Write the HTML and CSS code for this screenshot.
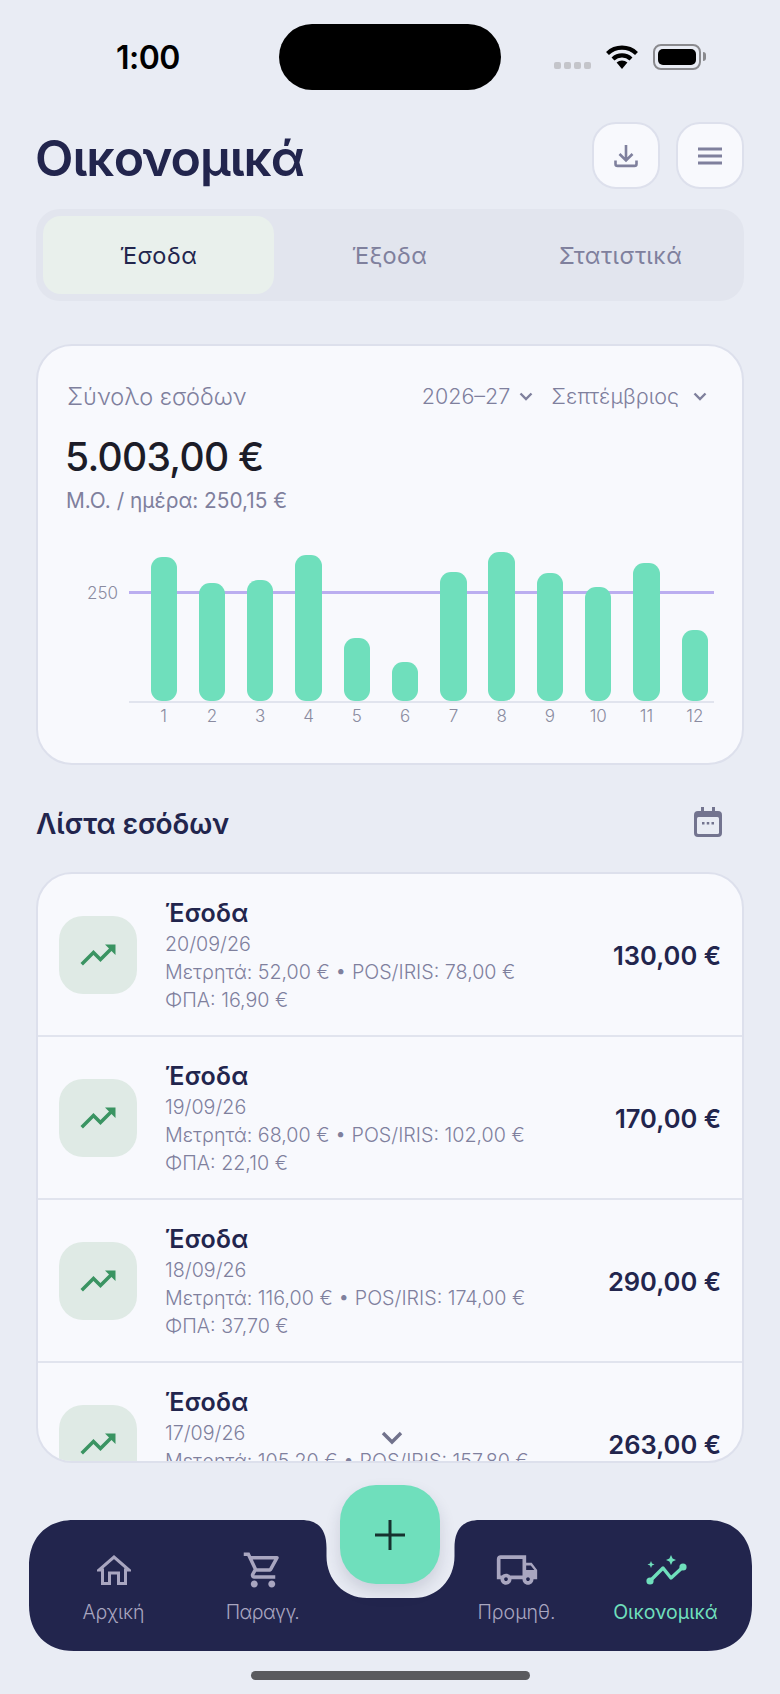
FILE: index.html
```html
<!DOCTYPE html>
<html lang="el">
<head>
  <meta charset="UTF-8" />
  <title>Οικονομικά</title>
  <link rel="stylesheet" href="styles.css">
</head>
<body>
  <div class="status">
    <div class="time">1:00</div>
    <div class="island"></div>
    <div class="status-right">
      <div class="dots"><i></i><i></i><i></i><i></i></div>
      <svg class="wifi" width="34" height="26" viewBox="0 0 34 26">
        <path d="M2.5 9.500a21 21 0 0 1 29 0M8 15a13 13 0 0 1 18 0" fill="none" stroke="#000" stroke-width="4.200"/>
        <path d="M11.600 18.600a8 8 0 0 1 10.800 0L17 25z"/>
      </svg>
      <div class="battery"><span></span></div>
      <div class="battery-cap"></div>
    </div>
  </div>

  <header class="top">
    <h1>Οικονομικά</h1>
    <button class="icon-btn">
      <svg width="26" height="26" viewBox="0 0 26 26" fill="none" stroke="#7f809d" stroke-width="2.600">
        <path d="M13 2v15M6.500 11l6.500 6.500 6.500-6.500M2.500 17.500v3.400a2 2 0 0 0 2 2h17a2 2 0 0 0 2-2v-3.400"/>
      </svg>
    </button>
    <button class="icon-btn">
      <svg width="26" height="18" viewBox="0 0 26 18" fill="none" stroke="#7f809d" stroke-width="2.800">
        <path d="M1 2h24M1 9h24M1 16h24"/>
      </svg>
    </button>
  </header>

  <nav class="tabs">
    <div class="tab active">Έσοδα</div>
    <div class="tab">Έξοδα</div>
    <div class="tab">Στατιστικά</div>
  </nav>

  <section class="card">
    <div class="card-top">
      <span class="card-label">Σύνολο εσόδων</span>
      <span class="picker picker-year">2026–27
        <svg width="14" height="9" viewBox="0 0 14 9" fill="none" stroke="#7f809d" stroke-width="2.400"><path d="M1.500 1.500 7 7l5.500-5.500"/></svg>
      </span>
      <span class="picker">Σεπτέμβριος
        <svg width="14" height="9" viewBox="0 0 14 9" fill="none" stroke="#7f809d" stroke-width="2.400"><path d="M1.500 1.500 7 7l5.500-5.500"/></svg>
      </span>
    </div>
    <div class="total">5.003,00 €</div>
    <div class="avg">Μ.Ο. / ημέρα: 250,15 €</div>
    <div class="chart">
      <div class="chart-y">250</div>
      <div class="chart-main">
        <div class="plot">
          <div class="ref-line"></div>
          <div class="bar" style="height:144px"></div>
          <div class="bar" style="height:118px"></div>
          <div class="bar" style="height:121px"></div>
          <div class="bar" style="height:146px"></div>
          <div class="bar" style="height:63px"></div>
          <div class="bar" style="height:39px"></div>
          <div class="bar" style="height:129px"></div>
          <div class="bar" style="height:149px"></div>
          <div class="bar" style="height:128px"></div>
          <div class="bar" style="height:114px"></div>
          <div class="bar" style="height:138px"></div>
          <div class="bar" style="height:71px"></div>
        </div>
        <div class="ticks">
          <span>1</span><span>2</span><span>3</span><span>4</span><span>5</span><span>6</span>
          <span>7</span><span>8</span><span>9</span><span>10</span><span>11</span><span>12</span>
        </div>
      </div>
    </div>
  </section>

  <div class="list-head">
    <h2>Λίστα εσόδων</h2>
    <svg width="28" height="30" viewBox="0 0 28 30">
      <path d="M7 0h3v4h8V0h3v4h3a4 4 0 0 1 4 4v18a4 4 0 0 1-4 4H4a4 4 0 0 1-4-4V8a4 4 0 0 1 4-4h3z" fill="#73748f"/>
      <rect x="3" y="10" width="22" height="17" rx="1.500" fill="#e9ecf4"/>
      <path d="M8 15h2.500v2.500H8zM12.750 15h2.500v2.500h-2.500zM17.500 15H20v2.500h-2.500z" fill="#73748f"/>
    </svg>
  </div>

  <section class="list">
    <div class="row">
      <div class="row-icon">
        <svg width="42" height="42" viewBox="0 0 24 24" fill="#3a9462"><path d="M16 6l2.290 2.290-4.880 4.880-4-4L2 16.590 3.410 18l6-6 4 4 6.300-6.290L22 12V6z"/></svg>
      </div>
      <div class="row-text">
        <div class="row-title">Έσοδα</div>
        <div class="row-line">20/09/26</div>
        <div class="row-line">Μετρητά: 52,00 € • POS/IRIS: 78,00 €</div>
        <div class="row-line">ΦΠΑ: 16,90 €</div>
      </div>
      <div class="row-amount">130,00 €</div>
    </div>
    <div class="row">
      <div class="row-icon">
        <svg width="42" height="42" viewBox="0 0 24 24" fill="#3a9462"><path d="M16 6l2.290 2.290-4.880 4.880-4-4L2 16.590 3.410 18l6-6 4 4 6.300-6.290L22 12V6z"/></svg>
      </div>
      <div class="row-text">
        <div class="row-title">Έσοδα</div>
        <div class="row-line">19/09/26</div>
        <div class="row-line">Μετρητά: 68,00 € • POS/IRIS: 102,00 €</div>
        <div class="row-line">ΦΠΑ: 22,10 €</div>
      </div>
      <div class="row-amount">170,00 €</div>
    </div>
    <div class="row">
      <div class="row-icon">
        <svg width="42" height="42" viewBox="0 0 24 24" fill="#3a9462"><path d="M16 6l2.290 2.290-4.880 4.880-4-4L2 16.590 3.410 18l6-6 4 4 6.300-6.290L22 12V6z"/></svg>
      </div>
      <div class="row-text">
        <div class="row-title">Έσοδα</div>
        <div class="row-line">18/09/26</div>
        <div class="row-line">Μετρητά: 116,00 € • POS/IRIS: 174,00 €</div>
        <div class="row-line">ΦΠΑ: 37,70 €</div>
      </div>
      <div class="row-amount">290,00 €</div>
    </div>
    <div class="row">
      <div class="row-icon">
        <svg width="42" height="42" viewBox="0 0 24 24" fill="#3a9462"><path d="M16 6l2.290 2.290-4.880 4.880-4-4L2 16.590 3.410 18l6-6 4 4 6.300-6.290L22 12V6z"/></svg>
      </div>
      <div class="row-text">
        <div class="row-title">Έσοδα</div>
        <div class="row-line">17/09/26</div>
        <div class="row-line">Μετρητά: 105,20 € • POS/IRIS: 157,80 €</div>
        <div class="row-line">ΦΠΑ: 34,19 €</div>
      </div>
      <div class="row-amount">263,00 €</div>
    </div>
    <svg class="more" width="22" height="14" viewBox="0 0 22 14" fill="none" stroke="#71728c" stroke-width="3.400"><path d="M2 2l9 9 9-9"/></svg>
  </section>

  <div class="bottom">
    <svg class="bottom-bg" width="723" height="131" viewBox="0 0 723 131">
      <path d="M45 0H272C290 0 297.500 10 297.500 28V36C297.500 60 315 78 338 78H385C408 78 425.500 60 425.500 36V28C425.500 10 433 0 451 0H678C706 0 723 18 723 46V85C723 113 706 131 678 131H45C17 131 0 113 0 85V46C0 18 17 0 45 0Z" fill="#22254d"/>
    </svg>
    <div class="nav-item nav-home">
      <div class="nav-icon">
        <svg width="34" height="30" viewBox="0 0 34 30" fill="none" stroke="#a9a6c0" stroke-width="3"><path d="M5.500 28.500V15H2L17 2l15 13h-3.500v13.500h-7V18h-9v10.500z"/></svg>
      </div>
      <span>Αρχική</span>
    </div>
    <div class="nav-item nav-orders">
      <div class="nav-icon">
        <svg width="42" height="42" viewBox="0 0 24 24" fill="#a9a6c0"><path d="M15.550 13c.75 0 1.410-.41 1.750-1.030l3.580-6.490A.996.996 0 0 0 20.010 4H5.210l-.94-2H1v2h2l3.600 7.590-1.350 2.440C4.520 15.370 5.480 17 7 17h12v-2H7l1.100-2h7.450zM6.160 6h12.150l-2.760 5H8.530L6.160 6zM7 18c-1.100 0-1.990.9-1.990 2S5.900 22 7 22s2-.9 2-2-.9-2-2-2zm10 0c-1.100 0-1.990.9-1.990 2s.89 2 1.990 2 2-.9 2-2-.9-2-2-2z"/></svg>
      </div>
      <span>Παραγγ.</span>
    </div>
    <div class="nav-item nav-suppliers">
      <div class="nav-icon">
        <svg width="44" height="44" viewBox="0 0 24 24" fill="#a9a6c0"><path d="M20 8h-3V4H3c-1.100 0-2 .9-2 2v11h2c0 1.660 1.340 3 3 3s3-1.340 3-3h6c0 1.660 1.340 3 3 3s3-1.340 3-3h2v-5l-3-4zM6 18c-.55 0-1-.45-1-1s.45-1 1-1 1 .45 1 1-.45 1-1 1zm2.220-3c-.55-.61-1.330-1-2.220-1s-1.670.39-2.220 1H3V6h12v9H8.220zM18 18c-.55 0-1-.45-1-1s.45-1 1-1 1 .45 1 1-.45 1-1 1zm-1-6V9.500h2.500l1.960 2.500H17z"/></svg>
      </div>
      <span>Προμηθ.</span>
    </div>
    <div class="nav-item nav-finance">
      <div class="nav-icon">
        <svg width="42" height="32" viewBox="0 0 42 32" fill="#6fdfbc">
          <path d="M5 27 18 14l8 10 12-11" fill="none" stroke="#6fdfbc" stroke-width="3.400" stroke-linejoin="round"/>
          <circle cx="5" cy="27" r="3.600"/><circle cx="38" cy="13" r="3.600"/>
          <path d="M26 1l1.600 3.400L31 6l-3.400 1.600L26 11l-1.600-3.400L21 6l3.400-1.600zM6 7l1 2.500 2.500 1L7 11.500 6 14l-1-2.500-2.500-1L5 9.500z"/>
        </svg>
      </div>
      <span>Οικονομικά</span>
    </div>
    <button class="fab">
      <svg width="30" height="30" viewBox="0 0 30 30" stroke="#16322f" stroke-width="3"><path d="M15 0v30M0 15h30"/></svg>
    </button>
  </div>

  <div class="home-bar"></div>
</body>
</html>
```

FILE: styles.css
```css
* { box-sizing: border-box; }
body { margin: 0; width: 780px; height: 1694px; overflow: hidden; background: #e9ecf4; font-family: Inter, "Noto Sans", sans-serif; color: #22254d; }
button { padding: 0; border: none; font: inherit; }

/* status bar */
.status { height: 122px; display: grid; grid-template-columns: 279px 222px 1fr; padding-top: 24px; align-items: start; }
.time { padding: 15px 0 0 116px; font-size: 32px; line-height: 38px; font-weight: 600; color: #000; letter-spacing: -0.5px; }
.island { height: 66px; background: #000; border-radius: 33px; }
.status-right { display: flex; align-items: flex-start; padding: 20px 0 0 53px; }
.dots { display: flex; gap: 3px; margin: 18px 14px 0 0; }
.dots i { width: 7px; height: 7px; border-radius: 2px; background: #c4c5ca; }
.wifi { margin-right: 14px; }
.battery { width: 48px; height: 26px; padding: 3px; border: 2px solid #8a8a8e; border-radius: 8px; }
.battery span { display: block; height: 100%; border-radius: 5px; background: #000; }
.battery-cap { width: 3px; height: 9px; margin: 8px 0 0 2px; border-radius: 0 3px 3px 0; background: #8a8a8e; }

/* header */
.top { display: flex; align-items: center; padding: 0 36px 0 35px; gap: 16px; height: 67px; }
.top h1 { margin: 4px auto 0 0; font-size: 50px; font-weight: 600; letter-spacing: -1px; }
.icon-btn { width: 68px; height: 67px; display: flex; align-items: center; justify-content: center; background: #f8f9fd; border: 2px solid #dde0ec; border-radius: 24px; }

/* tabs */
.tabs { display: flex; margin: 20px 36px 0; height: 92px; padding: 7px; background: #e2e5ee; border-radius: 24px; }
.tab { width: 231px; display: flex; align-items: center; justify-content: center; font-size: 23.500px; letter-spacing: 0.5px; color: #7f809d; border-radius: 18px; }
.tab.active { background: #e9f0ec; color: #22254d; }

/* summary card */
.card { margin: 43px 36px 0; height: 421px; padding: 35px 35px 0 29px; background: #f8f9fd; border: 2px solid #dde0ec; border-radius: 36px; }
.card-top { display: flex; align-items: center; height: 30px; color: #7f809d; }
.card-label { margin-right: auto; font-size: 23.500px; font-weight: 300; }
.picker { display: flex; align-items: center; gap: 14px; font-size: 21.500px; font-weight: 300; }
.picker-year { gap: 9px; margin-right: 18px; }
.total { margin: 21px 0 0 -2px; font-size: 39px; line-height: 50px; font-weight: 500; letter-spacing: -0.7px; color: #1c1c28; }
.avg { margin: 4px 0 0 -1px; font-size: 20.800px; line-height: 30px; color: #7f809d; }
.chart { display: flex; margin: 36px -7px 0 -1px; }
.chart-y { width: 63px; padding: 29px 11px 0 0; text-align: right; font-size: 17px; line-height: 24px; font-weight: 300; color: #8a8ba0; }
.chart-main { flex: 1; }
.plot { position: relative; height: 151px; display: flex; align-items: flex-end; gap: 21.900px; padding-left: 21.500px; border-bottom: 2px solid #e1e4ee; }
.ref-line { position: absolute; left: 0; right: 0; top: 39px; height: 3px; background: #bbaef0; }
.bar { position: relative; width: 26.400px; background: #6fdfbc; border-radius: 11px; }
.ticks { display: flex; gap: 21.900px; padding-left: 21.500px; margin-top: 1px; }
.ticks span { width: 26.400px; text-align: center; font-size: 17px; line-height: 24px; font-weight: 300; color: #8a8ba0; }

/* list */
.list-head { display: flex; align-items: center; justify-content: space-between; height: 30px; margin: 42px 58px 0 36px; }
.list-head h2 { margin: 3px 0 0; font-size: 28px; font-weight: 600; }
.list { position: relative; margin: 35px 36px 0; height: 591px; overflow: hidden; background: #f8f9fd; border: 2px solid #dde0ec; border-radius: 36px; }
.row { display: flex; align-items: center; height: 163px; padding: 0 21px 0 21px; border-bottom: 2px solid #e1e4ee; }
.row-icon { width: 78px; height: 78px; flex: none; display: flex; align-items: center; justify-content: center; background: #dfeae5; border-radius: 24px; }
.row-text { flex: 1; margin-left: 28px; }
.row-title { font-size: 25px; line-height: 34px; font-weight: 600; letter-spacing: 0.3px; }
.row-line { font-size: 19.700px; line-height: 28px; font-weight: 300; color: #7f809d; }
.row-amount { margin-top: 2px; font-size: 25.500px; font-weight: 600; }
.more { position: absolute; left: 343px; top: 557px; }

/* bottom nav */
.bottom { position: relative; width: 723px; height: 131px; margin: 57px 0 0 28.500px; }
.bottom-bg { position: absolute; left: 0; top: 0; }
.nav-item { position: absolute; top: 0; width: 150px; padding-top: 28px; display: flex; flex-direction: column; align-items: center; color: #a9a6c0; font-size: 19.500px; line-height: 26px; font-weight: 300; }
.nav-icon { height: 44px; margin-bottom: 7px; display: flex; align-items: center; }
.nav-home { left: 10px; }
.nav-orders { left: 159px; letter-spacing: -0.5px; }
.nav-suppliers { left: 413px; }
.nav-finance { left: 562px; color: #6fdfbc; font-weight: 400; }
.fab { position: absolute; left: 311.500px; top: -35px; width: 100px; height: 99px; display: flex; align-items: center; justify-content: center; background: #6fdfbc; border-radius: 36px; box-shadow: 0 8px 16px rgba(34, 37, 77, 0.15); }
.home-bar { width: 279px; height: 9px; margin: 20px 0 0 251px; border-radius: 5px; background: #5a5a5e; }
```
